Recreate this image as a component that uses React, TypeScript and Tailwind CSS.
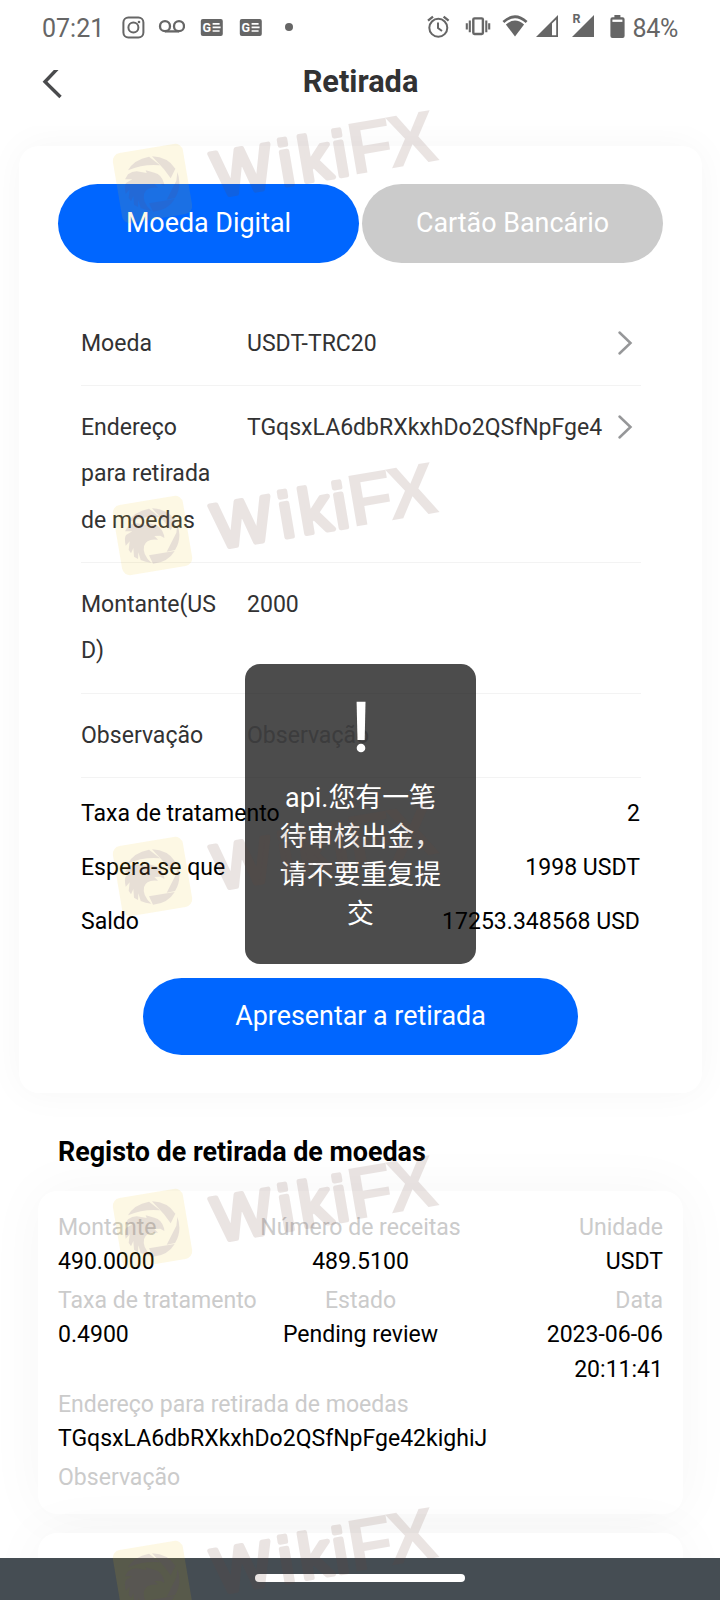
import type { ReactNode } from 'react';

const summary = [
  { label: 'Taxa de tratamento', value: '2' },
  { label: 'Espera-se que', value: '1998 USDT' },
  { label: 'Saldo', value: '17253.348568 USD' },
];

const watermarkTops = [100, 452, 793, 1145, 1497];

function StatusBar() {
  return (
    <div className="h-[70px] shrink-0 flex items-start pl-[42px] pr-[42px] pt-[13px] text-[25px] leading-[32px] text-[#666666]">
      <span className="w-[79px]">07:21</span>
      {/* Instagram */}
      <svg className="w-6 h-6 mt-[2px] mr-[13px]" viewBox="0 0 24 24" fill="none" stroke="#666" strokeWidth="2">
        <rect x="2.4" y="2.6" width="20" height="20" rx="5" />
        <circle cx="12.4" cy="12.6" r="5" />
        <circle cx="18" cy="7" r="1.3" fill="#666" stroke="none" />
      </svg>
      {/* Voicemail */}
      <svg className="w-[27px] h-6 mt-[2px] mr-[15px]" viewBox="0 0 27 24" fill="none" stroke="#666" strokeWidth="2.3">
        <circle cx="7" cy="11.2" r="5" />
        <circle cx="21" cy="11.2" r="5" />
        <path d="M7 16.4h14" />
      </svg>
      {[0, 1].map((n) => (
        <svg key={n} className="w-[23px] h-6 mt-[2px] mr-4" viewBox="0 0 23 24">
          <rect x="0.8" y="4" width="22" height="17" rx="2" fill="#666" />
          <text x="2.4" y="16.8" fontSize="12.5" fontWeight="700" fill="#fff" fontFamily="Roboto, sans-serif">
            G
          </text>
          <path d="M12.6 8.8h7M12.6 12.3h8M12.6 16h7" stroke="#fff" strokeWidth="1.7" />
        </svg>
      ))}
      <span className="w-2 h-2 mt-[10px] ml-[7px] rounded-full bg-[#666666]" />
      <div className="flex items-start ml-auto">
        {/* Alarm */}
        <svg className="w-6 h-6 mt-[2px] mr-[15px]" viewBox="0 0 24 24" fill="none" stroke="#666" strokeWidth="2">
          <circle cx="12.3" cy="12.8" r="9" />
          <path d="M12 7.5v5.5l4 3" />
          <path d="M2 5.6L7 1.6M22.6 5.6L17.6 1.6" strokeWidth="2.3" />
        </svg>
        {/* Vibrate */}
        <svg className="w-[26px] h-6 mt-[2px] mr-[11px]" viewBox="0 0 26 24" fill="none" stroke="#666" strokeWidth="2.4">
          <rect x="8.3" y="3.4" width="9.6" height="15.6" rx="1.2" />
          <path d="M4.8 5.5v11.8M1.8 8.2v6.4M21.3 5.5v11.8M24.2 8.2v6.4" strokeWidth="2.1" />
        </svg>
        {/* Wifi */}
        <svg className="w-[26px] h-6 mt-[2px] mr-2" viewBox="0 0 26 24">
          <path d="M0.500 6Q13 -5.500 25.500 6L23.700 7.900Q13 -1.600 2.300 7.900Z" fill="#666" />
          <path d="M3.900 9.600Q13 1.600 22.100 9.600L13 21.500Z" fill="#666" />
        </svg>
        {/* Signal 1 */}
        <svg className="w-[22px] h-6 mt-[2px] mr-3.5" viewBox="0 0 22 24">
          <path d="M0 22L22 0V22Z" fill="#666" />
          <path d="M16 8.6L20.2 4.4V20.2H16Z" fill="#fff" />
        </svg>
        {/* Signal 2 */}
        <svg className="w-[23px] h-6 mt-[2px] mr-[15px] overflow-visible" viewBox="0 0 23 24">
          <path d="M0 22L22 0V22Z" fill="#666" />
          <path d="M0 -2H10V9H0Z" fill="#fff" />
          <text x="0.6" y="8" fontSize="12.5" fontWeight="700" fill="#666" fontFamily="Roboto, sans-serif">
            R
          </text>
        </svg>
        {/* Battery */}
        <svg className="w-[15px] h-6 mt-[2px] mr-[7px]" viewBox="0 0 15 24">
          <path d="M4.4 0h6v2.3H12.6q2 0 2 2V21q0 2-2 2H2.4q-2 0-2-2V4.300q0-2 2-2H4.400Z" fill="#666" />
          <path d="M2.400 4.600h10v2.300h-10Z" fill="#fff" />
        </svg>
        <span className="tracking-[-0.3px]">84%</span>
      </div>
    </div>
  );
}

function Field({ label, arrow, children }: { label: string; arrow?: boolean; children: ReactNode }) {
  return (
    <div className="flex items-start pt-[19.2px] pb-[18.400px] border-b border-[#f3f3f3] leading-[46.08px]">
      <span className="w-[143px] mr-[23px] shrink-0 wrap-anywhere">{label}</span>
      <span className="flex-1 whitespace-nowrap">{children}</span>
      {arrow && (
        <svg className="w-4 h-[26px] mt-[9px] mr-[8px]" viewBox="0 0 16 26" fill="none">
          <path d="M2.500 2.500L13.500 13L2.500 23.500" stroke="#969799" strokeWidth="2.500" strokeLinecap="round" />
        </svg>
      )}
    </div>
  );
}

function Item({ label, value, align }: { label: string; value?: string; align?: string }) {
  return (
    <div className={align}>
      <div className="text-[#cbcbcb]">{label}</div>
      <div>{value}</div>
    </div>
  );
}

function Toast() {
  return (
    <div className="absolute z-20 left-[245px] top-[664px] w-[231px] h-[300px] px-[34px] rounded-[15px] bg-black/70 text-white text-center">
      <svg className="block mx-auto mt-[36px] w-5 h-[54px]" viewBox="0 0 20 54" fill="#fff">
        <path d="M5.600 1.700H14.500L13.700 40H6.500Z" />
        <circle cx="10" cy="48" r="4.300" />
      </svg>
      <p className="mt-[25px] -mx-px text-[26.88px] leading-[38.6px] break-all">api.您有一笔待审核出金，请不要重复提交</p>
    </div>
  );
}

function Watermark({ top }: { top: number }) {
  return (
    <svg
      className="absolute z-30 left-[100px] w-[350px] h-[130px] pointer-events-none"
      style={{ top }}
      viewBox="0 0 350 130"
    >
      <rect
        x="17"
        y="48"
        width="71"
        height="71"
        rx="8"
        transform="rotate(-9.6 52.5 83.5)"
        fill="rgb(240,190,15)"
        fillOpacity="0.115"
      />
      {/* eagle inside a camera shutter */}
      <g transform="translate(11.700 43.700) scale(0.3333)" fill="rgb(90,60,130)" opacity="0.13">
        <path d="M49 80Q66 48 112 39L145 65Q96 60 49 80Z" />
        <path d="M121 38Q168 40 191 75L177 104L157 77Z" />
        <path d="M197 85Q212 126 190 163L165 168L194 111Z" />
        <path d="M112 179L189 166Q168 201 124 204Z" />
        <path d="M40 107L49 92Q61 83 75 83L105 88L102 80L128 87Q150 92 157 119L158 127L146 120L128 121L139 132Q104 127 97 151Q91 177 119 201Q101 200 87 193L80 170L79 190L67 183L65 157L58 173L51 162L54 137L42 150Q37 126 43 118L62 107Z" />
      </g>
      <g transform="translate(107 99.500) rotate(-9.600)" fill="rgb(110,70,60)" opacity="0.14">
        <text
          x="10 77 97 132"
          y="-1"
          fontSize="63"
          fontFamily="'Liberation Sans', sans-serif"
          stroke="rgb(110,70,60)"
          strokeWidth="5"
          strokeLinejoin="round"
        >
          Wiki
        </text>
        <text x="147 187" y="0" fontSize="74" fontWeight="700" fontFamily="'Liberation Sans', sans-serif">
          FX
        </text>
      </g>
    </svg>
  );
}

export default function App() {
  return (
    <div className="relative w-[720px] h-[1600px] overflow-hidden flex flex-col bg-white text-[23.04px] text-black font-['Roboto','Noto_Sans_CJK_SC',sans-serif]">
      <StatusBar />

      {/* Header */}
      <header className="relative z-10 h-14 shrink-0 bg-white flex items-start justify-center">
        <svg className="w-[22px] h-[30px] ml-[41px] -mr-[62px]" viewBox="0 0 22 30" fill="none">
          <path d="M19.500 -4.500L4 11.700L19.500 27" stroke="#4a4b4d" strokeWidth="3.400" />
        </svg>
        <h1 className="flex-1 text-center text-[30.72px] leading-[23px] font-bold text-[#323233]">Retirada</h1>
      </header>

      <main className="flex-1 overflow-hidden pt-[20px]">
        {/* Withdrawal form */}
        <section className="ml-[19px] mr-[18px] h-[947px] px-[39px] pt-[38px] rounded-[20px] bg-white shadow-[0_0_38px_rgba(0,0,0,0.04)]">
          <div className="flex gap-[3px] text-[26.88px] leading-[79px] text-white text-center">
            <button className="flex-1 h-[79px] rounded-full bg-[#0066ff]">Moeda Digital</button>
            <button className="flex-1 h-[79px] rounded-full bg-[#cbcbcb]">Cartão Bancário</button>
          </div>

          <div className="mt-[38.5px] ml-[23px] mr-[22px] text-[#323233]">
            <Field label="Moeda" arrow>USDT-TRC20</Field>
            <Field label="Endereço para retirada de moedas" arrow>TGqsxLA6dbRXkxhDo2QSfNpFge4</Field>
            <Field label="Montante(USD)">2000</Field>
            <Field label="Observação">
              <span className="text-[#c8c9cc]">Observação</span>
            </Field>
          </div>

          <div className="mt-[8.200px] mx-[23px]">
            {summary.map((row) => (
              <div key={row.label} className="flex justify-between leading-[54px]">
                <span>{row.label}</span>
                <span>{row.value}</span>
              </div>
            ))}
          </div>

          <button className="block mx-auto mt-[29px] w-[435px] h-[77px] rounded-full bg-[#0066ff] text-[26.88px] leading-[77px] text-white">
            Apresentar a retirada
          </button>
        </section>

        <h2 className="mt-[39px] ml-[58px] text-[26.88px] leading-[40px] font-bold">Registo de retirada de moedas</h2>

        {/* Records */}
        <section className="mt-[19px] ml-[38px] mr-[37px] h-[323px] px-5 pt-[19.5px] rounded-[19px] bg-white leading-[34.56px] shadow-[0_0_58px_rgba(0,0,0,0.04)]">
          <div className="h-[73px] grid grid-cols-3">
            <Item label="Montante" value="490.0000" />
            <Item label="Número de receitas" value="489.5100" align="text-center" />
            <Item label="Unidade" value="USDT" align="text-right" />
          </div>
          <div className="h-[104px] grid grid-cols-3">
            <Item label="Taxa de tratamento" value="0.4900" />
            <Item label="Estado" value="Pending review" align="text-center" />
            <Item label="Data" value="2023-06-06 20:11:41" align="text-right" />
          </div>
          <div className="h-[73px]">
            <Item label="Endereço para retirada de moedas" value="TGqsxLA6dbRXkxhDo2QSfNpFge42kighiJ" />
          </div>
          <Item label="Observação" />
        </section>
        <section className="mt-[19px] ml-[38px] mr-[37px] h-[323px] rounded-[19px] bg-white shadow-[0_0_58px_rgba(0,0,0,0.04)]" />
      </main>

      {/* System navigation */}
      <div className="h-[42px] shrink-0 bg-[#454d53] flex justify-center pt-4">
        <span className="w-[210px] h-2 rounded-full bg-white" />
      </div>

      <Toast />
      {watermarkTops.map((top) => (
        <Watermark key={top} top={top} />
      ))}
    </div>
  );
}
